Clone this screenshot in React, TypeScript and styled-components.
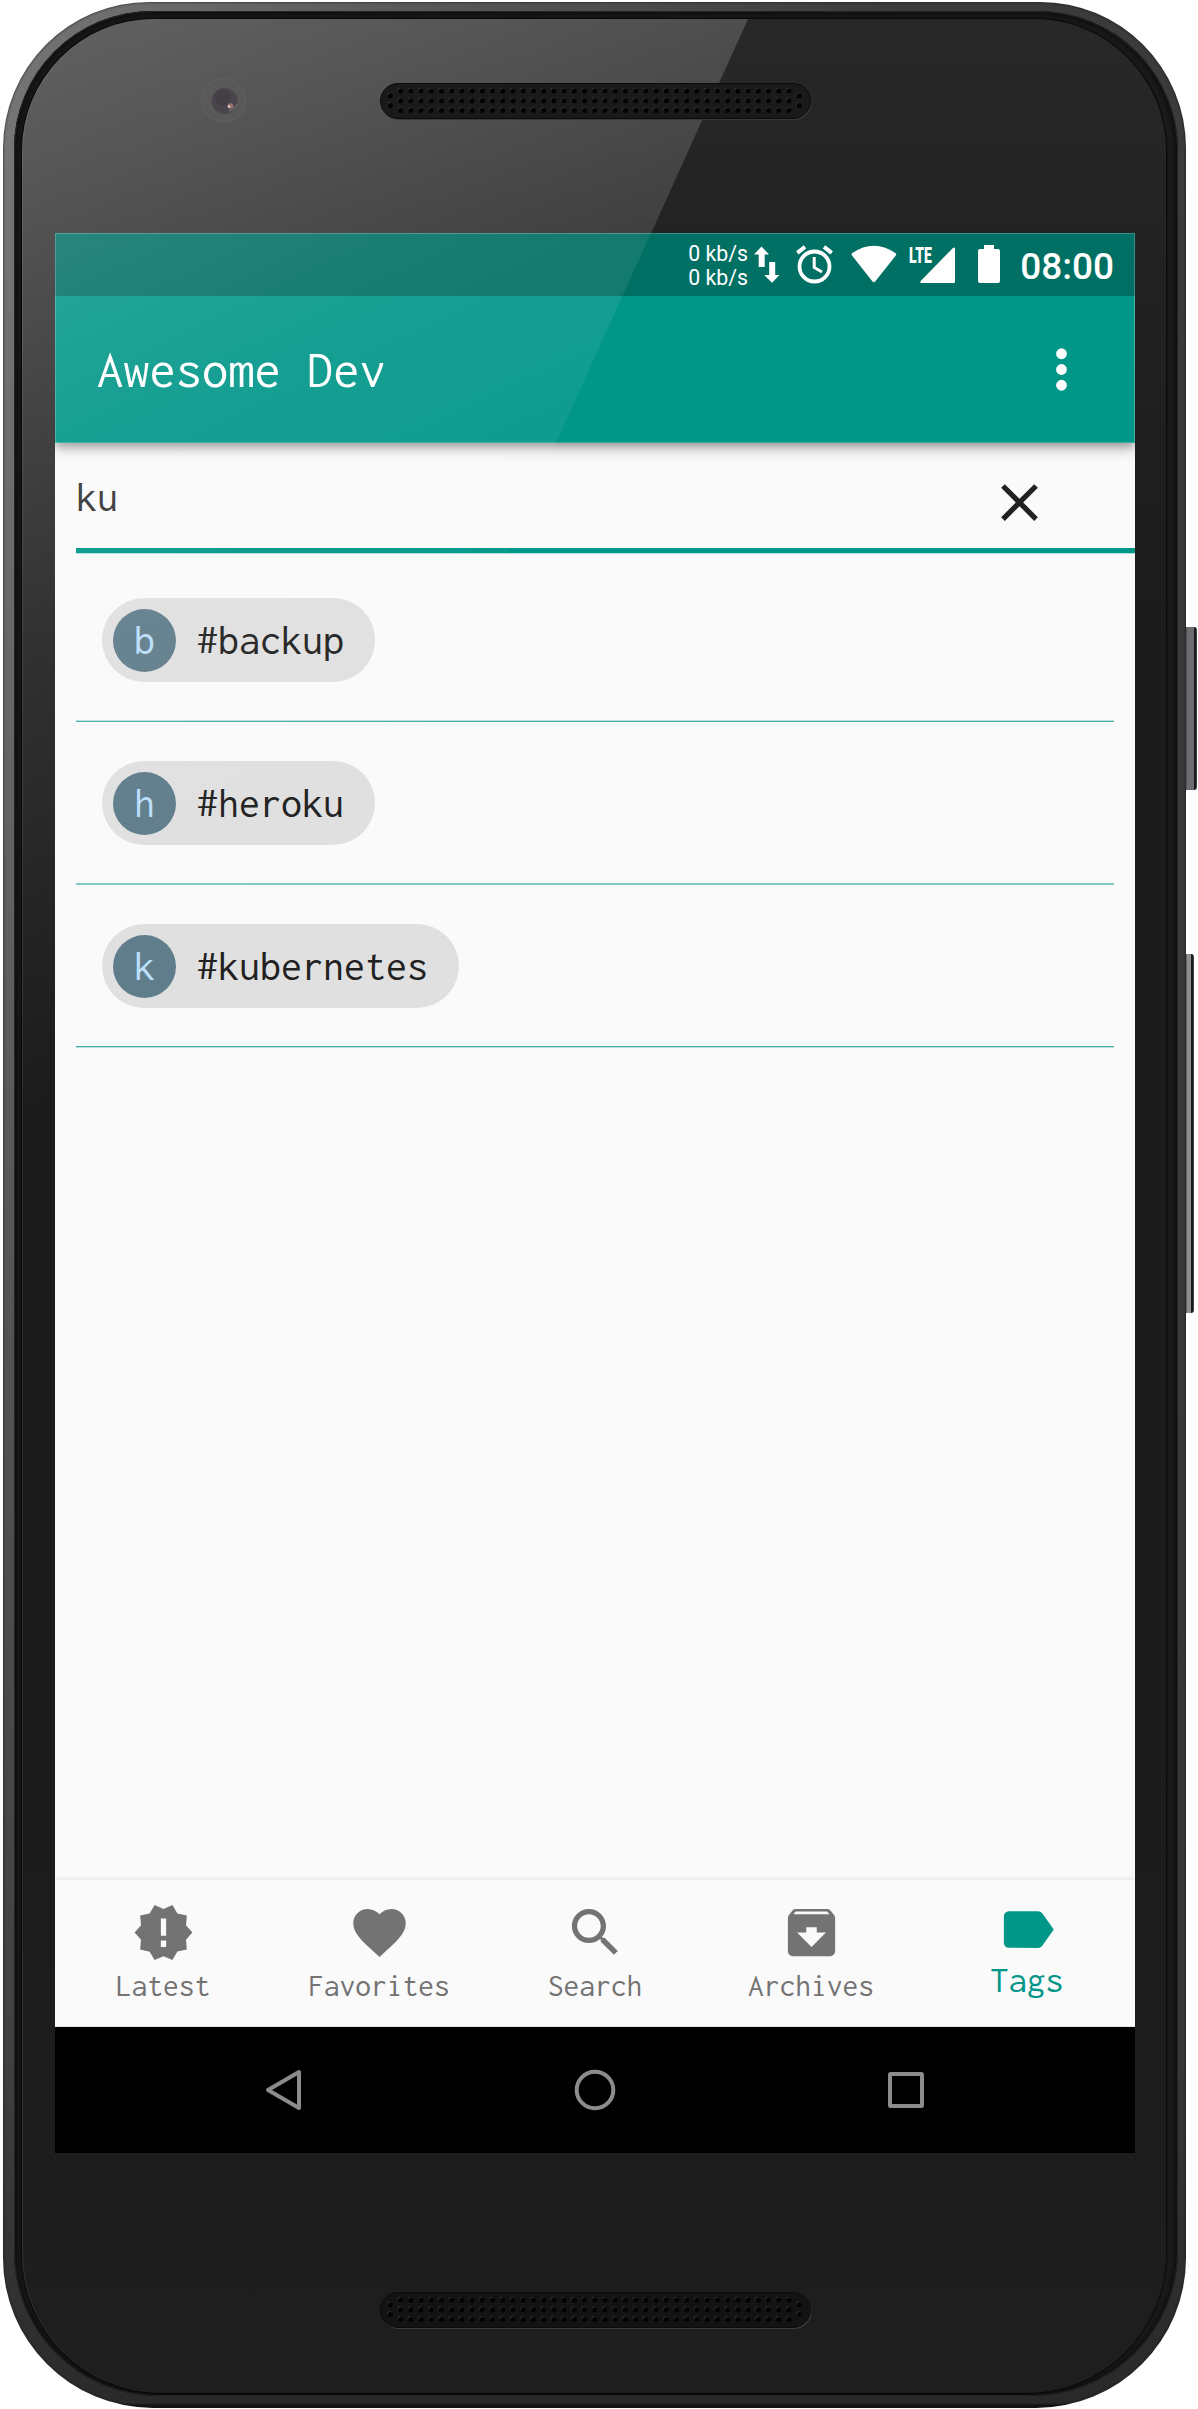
import React from "react";
import styled, { createGlobalStyle } from "styled-components";

const MONO = `Inconsolata, "DejaVu Sans Mono", monospace`;
const TEAL = "#009688";

const GlobalStyle = createGlobalStyle`
  body {
    margin: 0;
    background: #ffffff;
  }
`;

/* ---------- Handset ---------- */

const Stage = styled.div`
  position: relative;
  box-sizing: border-box;
  width: 1198px;
  height: 2409px;
  padding: 2px 0 0 3px;
  overflow: hidden;
`;

const SideButton = styled.div<{ $top: number; $height: number; $width: number; $light: string }>`
  position: absolute;
  left: 1185px;
  top: ${(p) => p.$top}px;
  width: ${(p) => p.$width}px;
  height: ${(p) => p.$height}px;
  border-radius: 0 3px 3px 0;
  background: linear-gradient(
    to right,
    #3c3a3b 0 1px,
    ${(p) => p.$light} 2px calc(100% - 3.5px),
    #1b1b1b calc(100% - 2.5px) calc(100% - 1px),
    #6a6869 100%
  );
`;

const Body = styled.div`
  position: relative;
  box-sizing: border-box;
  width: 1183px;
  height: 2406px;
  padding: 9px 8px 12px 11px;
  border-radius: 146px 146px 150px 150px;
  background:
    linear-gradient(to bottom, transparent calc(100% - 5px), #151515 calc(100% - 3px)),
    radial-gradient(ellipse 900px 2300px at 0 150px, rgba(255, 255, 255, 0.3), rgba(255, 255, 255, 0.14) 50%, transparent 100%),
    linear-gradient(to bottom, #3c3a3b 0, #3a3738 60%, #383637 85%, #2a292a 100%);
  box-shadow: inset 0 0 2px 1px rgba(20, 20, 20, 0.45);
`;

const Rim = styled.div`
  box-sizing: border-box;
  height: 100%;
  padding: 8px 12px 3px 8px;
  border-radius: 138px 140px 146px 144px;
  background: #1c1c1c;
  box-shadow: inset 0 0 0 1px #252425, inset 0 0 5px 4px #0f0f0f;
`;

const Glass = styled.div`
  position: relative;
  box-sizing: border-box;
  height: 100%;
  padding: 0 31px 0 33px;
  border-radius: 132px 132px 140px 140px;
  background: linear-gradient(to bottom, #282828 0, #222222 250px, #1b1b1b 620px, #1b1b1b 1700px, #1e1e1e 100%);
  box-shadow: 0 0 2px 1px #050505, inset 1px 0 0 rgba(255, 255, 255, 0.09);
  overflow: hidden;

  &::before {
    content: "";
    position: absolute;
    inset: 0;
    clip-path: polygon(0 0, 726px 0, 0 1603px);
    background: linear-gradient(
      155deg,
      rgba(255, 255, 255, 0.27) 0,
      rgba(255, 255, 255, 0.22) 180px,
      rgba(255, 255, 255, 0.15) 400px,
      rgba(255, 255, 255, 0.09) 600px,
      transparent 1000px
    );
  }
`;

const TopBezel = styled.div`
  position: relative;
  display: flex;
  align-items: flex-start;
  box-sizing: border-box;
  height: 214px;
  padding: 59px 0 0 146px;
  gap: 133px;
`;

const BottomBezel = styled.div`
  display: flex;
  padding: 136px 0 0 325px;
`;

const SpeakerArt = styled.svg<{ $drop: number }>`
  display: block;
  flex: none;
  margin-top: ${(p) => p.$drop}px;
`;

const BlockSvg = styled.svg`
  display: block;
  flex: none;
`;

/* ---------- Screen ---------- */

const Screen = styled.div`
  position: relative;
  display: flex;
  flex-direction: column;
  width: 1080px;
  height: 1920px;
  background: #fafafa;
  overflow: hidden;
`;

const ScreenGlare = styled.div`
  position: absolute;
  inset: 0;
  z-index: 3;
  pointer-events: none;
  clip-path: polygon(0 0, 596px 0, 0 1316px);
  background: linear-gradient(
    155deg,
    rgba(255, 255, 255, 0.155) 0,
    rgba(255, 255, 255, 0.09) 190px,
    rgba(255, 255, 255, 0.055) 400px,
    rgba(255, 255, 255, 0.02) 560px,
    transparent 700px
  );
`;

const Header = styled.header`
  position: relative;
  z-index: 2;
  flex: none;
  box-shadow: 0 6px 12px rgba(0, 0, 0, 0.27), 0 2px 8px rgba(0, 0, 0, 0.2);

  &::after {
    content: "";
    position: absolute;
    inset: 0;
    border: 1px solid rgba(255, 255, 255, 0.22);
  }
`;

const StatusBar = styled.div`
  display: flex;
  align-items: flex-start;
  justify-content: flex-end;
  box-sizing: border-box;
  height: 63px;
  padding: 12px 21px 0 0;
  background: #006f64;
  color: #ffffff;
  font-family: Roboto, sans-serif;
`;

const Speed = styled.div`
  margin: -3px 6px 0 0;
  font-size: 21.3px;
  line-height: 24px;
  white-space: nowrap;
`;

const StatusIcon = styled.svg<{ $after: number }>`
  display: block;
  flex: none;
  margin-right: ${(p) => p.$after}px;
`;

const Signal = styled.div`
  display: flex;
  width: 46px;
  margin-right: 23px;
`;

const SignalLabel = styled.span`
  width: 11px;
  margin-top: 1px;
  font-size: 22.5px;
  font-weight: 900;
  line-height: 18px;
  white-space: nowrap;
  transform: scaleX(0.62);
  transform-origin: left top;
`;

const Clock = styled.div`
  margin-top: 4px;
  font-size: 37px;
  font-weight: 500;
  line-height: 36px;
`;

const AppBar = styled.div`
  display: flex;
  align-items: center;
  justify-content: space-between;
  height: 147px;
  padding: 0 42px;
  background: ${TEAL};
`;

const Title = styled.h1`
  margin: 0;
  color: #ffffff;
  font-family: ${MONO};
  font-size: 52.5px;
  font-weight: 400;
  line-height: 62px;
`;

const SearchField = styled.div`
  display: flex;
  align-items: center;
  justify-content: space-between;
  flex: none;
  box-sizing: border-box;
  height: 110px;
  margin-left: 21px;
  padding: 0 84px 0 0;
  border-bottom: 5px solid ${TEAL};
  box-shadow: 0 1px 0 #b2dfdb;
`;

const Query = styled.span`
  margin-top: 2px;
  color: #333333;
  font-family: ${MONO};
  font-size: 42px;
  line-height: 50px;
`;

const ClearIcon = styled.svg`
  display: block;
  margin-top: 13px;
`;

const TagList = styled.ul`
  flex: 1;
  margin: 0;
  padding: 6px 21px 0;
  list-style: none;
`;

const TagRow = styled.li`
  display: flex;
  flex-direction: column;
  align-items: flex-start;
  justify-content: space-between;
  box-sizing: border-box;
  height: 163px;
  padding-top: 39px;
`;

const Chip = styled.div`
  display: flex;
  align-items: center;
  box-sizing: border-box;
  height: 84px;
  margin-left: 26px;
  padding: 0 31px 0 11px;
  border-radius: 42px;
  background: #e0e0e0;
`;

const Avatar = styled.span`
  width: 63px;
  height: 63px;
  margin-right: 21px;
  border-radius: 50%;
  background: #607d8b;
  color: #bbdefb;
  font-family: ${MONO};
  font-size: 42px;
  line-height: 62px;
  text-align: center;
`;

const ChipText = styled.span`
  margin-top: -1px;
  color: #212121;
  font-family: ${MONO};
  font-size: 42px;
  line-height: 62px;
`;

const Divider = styled.div<{ $upper: string; $lower: string }>`
  align-self: stretch;
  height: 2px;
  background: linear-gradient(to bottom, ${(p) => p.$upper} 50%, ${(p) => p.$lower} 50%);
`;

const TabBar = styled.nav`
  display: flex;
  flex: none;
  height: 147px;
  background: #fafafa;
  box-shadow: 0 -2px 4px rgba(0, 0, 0, 0.075), inset 0 -1px 0 #e4e4e4;
`;

const Tab = styled.div<{ $active?: boolean }>`
  display: flex;
  flex: 1;
  flex-direction: column;
  align-items: center;
  box-sizing: border-box;
  padding-top: ${(p) => (p.$active ? 18 : 21)}px;
  color: ${(p) => (p.$active ? TEAL : "#737373")};
  font-family: ${MONO};
  font-size: ${(p) => (p.$active ? 36.75 : 31.5)}px;
  line-height: ${(p) => (p.$active ? 40 : 36)}px;
`;

const TabLabel = styled.span<{ $active?: boolean }>`
  margin-top: ${(p) => (p.$active ? -1 : 4)}px;
`;

const SystemBar = styled.div`
  display: flex;
  flex: none;
  align-items: center;
  justify-content: center;
  gap: 239px;
  height: 126px;
  background: #000000;
`;

/* ---------- Drawings ---------- */

const COLUMNS = Array.from({ length: 39 }, (_, i) => 20.5 + i * 10.22);
const ROWS = [8, 17.8, 27.6];

function Speaker({ drop, fill, lip }: { drop: number; fill: string; lip: string }) {
  const dots: [number, number][] = [
    [10.3, 12.8],
    [10.3, 22.6],
    [419.3, 12.8],
    [419.3, 22.6],
  ];
  COLUMNS.forEach((x) => ROWS.forEach((y) => dots.push([x, y])));
  return (
    <SpeakerArt $drop={drop} width="432" height="38" viewBox="0 0 432 38">
      <rect x="1.5" y="2" width="430" height="35" rx="17.5" fill={lip} />
      <rect x="0.5" y="0.5" width="430" height="35" rx="17.5" fill={fill} stroke="#0b0b0b" />
      {dots.map(([x, y], i) => (
        <g key={i}>
          <circle cx={x - 0.8} cy={y - 1} r="2.3" fill="#343434" />
          <circle cx={x} cy={y} r="2.5" fill="#030303" />
        </g>
      ))}
    </SpeakerArt>
  );
}

function Camera() {
  return (
    <BlockSvg width="46" height="46" viewBox="0 0 46 46">
      <circle cx="22.5" cy="22.5" r="21.8" fill="#5a595a" stroke="#636263" />
      <circle cx="23.7" cy="23" r="13" fill="#4a454c" />
      <circle cx="21.5" cy="19.5" r="8" fill="#443f47" />
      <path d="M28 33a13 13 0 0 0 8-7" fill="none" stroke="#716a70" strokeWidth="1.5" />
      <circle cx="29.5" cy="28" r="2.8" fill="#a0736b" />
      <circle cx="28" cy="28.6" r="1.2" fill="#e8dfe4" />
    </BlockSvg>
  );
}

function MaterialIcon({ d }: { d: string }) {
  return (
    <BlockSvg width="63" height="63" viewBox="0 0 24 24" fill="currentColor">
      <path d={d} />
    </BlockSvg>
  );
}

const tabs = [
  {
    label: "Latest",
    d: "M23 12l-2.44-2.78.34-3.68-3.61-.82-1.89-3.18L12 3 8.6 1.54 6.71 4.72l-3.61.81.34 3.68L1 12l2.44 2.78-.34 3.69 3.61.82 1.89 3.18L12 21l3.4 1.46 1.89-3.18 3.61-.82-.34-3.68L23 12zm-10 5.5h-2V15h2v2.500zm0-4.300h-2V6.700h2v6.500z",
  },
  {
    label: "Favorites",
    d: "M12 21.35l-1.45-1.32C5.4 15.36 2 12.28 2 8.5 2 5.42 4.42 3 7.5 3c1.74 0 3.41.81 4.5 2.09C13.09 3.81 14.76 3 16.5 3 19.58 3 22 5.42 22 8.5c0 3.78-3.4 6.86-8.55 11.54L12 21.35z",
  },
  {
    label: "Search",
    d: "M15.5 14h-.79l-.28-.27C15.41 12.59 16 11.11 16 9.5 16 5.91 13.09 3 9.5 3S3 5.91 3 9.5 5.91 16 9.5 16c1.61 0 3.09-.59 4.23-1.57l.27.28v.79l5 4.99L20.49 19l-4.99-5zm-6 0C7.01 14 5 11.99 5 9.5S7.01 5 9.5 5 14 7.01 14 9.500 11.99 14 9.5 14z",
  },
  {
    label: "Archives",
    d: "M20.54 5.23l-1.39-1.68C18.88 3.21 18.47 3 18 3H6c-.47 0-.88.21-1.16.55L3.46 5.23C3.17 5.57 3 6.02 3 6.5V19c0 1.1.9 2 2 2h14c1.1 0 2-.9 2-2V6.5c0-.48-.17-.93-.46-1.27zM12 17.5L6.5 12H10v-2h4v2h3.500L12 17.5zM5.12 5l.81-1h12l.94 1H5.12z",
  },
  {
    label: "Tags",
    active: true,
    d: "M17.63 5.84C17.27 5.33 16.67 5 16 5L5 5.01C3.9 5.01 3 5.9 3 7v10c0 1.1.9 1.99 2 1.99L16 19c.67 0 1.27-.33 1.63-.84L22 12l-4.37-6.16z",
  },
];

const tags = [
  { name: "backup", upper: "#b6e0dc", lower: "#45b0a6" },
  { name: "heroku", upper: "#7ecac3", lower: "#7ecac3" },
  { name: "kubernetes", upper: "#45b0a6", lower: "#b6e0dc" },
];

export default function App() {
  return (
    <>
      <GlobalStyle />
      <Stage>
        <SideButton $top={627} $height={163} $width={12} $light="#6d6b6f" />
        <SideButton $top={954} $height={359} $width={8.5} $light="#8f8d8e" />
        <Body>
          <Rim>
            <Glass>
              <TopBezel>
                <Camera />
                <Speaker drop={5} fill="#1a1a1a" lip="#3a3a3b" />
              </TopBezel>

              <Screen>
                <Header>
                  <StatusBar>
                    <Speed>
                      <div>0 kb/s</div>
                      <div>0 kb/s</div>
                    </Speed>
                    <StatusIcon $after={16} width="26" height="38" viewBox="0 0 26 38" fill="#fff">
                      <path d="M7.500 1.500L15 9.500H10.700V22H4.700V9.500H0z" />
                      <path d="M15.200 17H21.200V30H25.500L18 37.800L10.200 30H15.200z" />
                    </StatusIcon>
                    <StatusIcon $after={18} width="37" height="39" viewBox="0 0 37 39" fill="none" stroke="#fff">
                      <circle cx="18.500" cy="21.500" r="15" strokeWidth="3.800" />
                      <path d="M18.200 12V22.500L26 27" strokeWidth="3" />
                      <path d="M1.300 7.800L9 1.800M35.700 7.800L28 1.800" strokeWidth="4" />
                    </StatusIcon>
                    <StatusIcon $after={12} width="46" height="38" viewBox="0 0 46 38" fill="#fff">
                      <path d="M1 10.500Q-.2 9 1.400 8Q22.800-6.500 44.300 8Q46 9 44.800 10.500L24.200 36.500Q22.800 38 21.500 36.500z" />
                    </StatusIcon>
                    <Signal>
                      <SignalLabel>LTE</SignalLabel>
                      <BlockSvg width="35" height="38" viewBox="0 0 35 38" fill="#fff">
                        <path d="M32.500 3.400Q35 1.500 35 4V36.500Q35 38 33.500 38H1.500Q-.7 38 .7 36z" />
                      </BlockSvg>
                    </Signal>
                    <StatusIcon $after={20} width="22" height="38" viewBox="0 0 22 38" fill="#fff">
                      <path d="M6 0H16V4H20Q22 4 22 6V36Q22 38 20 38H2Q0 38 0 36V6Q0 4 2 4H6z" />
                    </StatusIcon>
                    <Clock>08:00</Clock>
                  </StatusBar>
                  <AppBar>
                    <Title>Awesome Dev</Title>
                    <BlockSvg width="63" height="63" viewBox="0 0 24 24" fill="#fff">
                      <circle cx="12" cy="6" r="2.050" />
                      <circle cx="12" cy="12" r="2.050" />
                      <circle cx="12" cy="18" r="2.050" />
                    </BlockSvg>
                  </AppBar>
                </Header>

                <SearchField>
                  <Query>ku</Query>
                  <ClearIcon width="63" height="63" viewBox="0 0 24 24" fill="#212121">
                    <path d="M19 6.410L17.590 5 12 10.590 6.410 5 5 6.410 10.590 12 5 17.590 6.410 19 12 13.410 17.590 19 19 17.590 13.410 12z" />
                  </ClearIcon>
                </SearchField>

                <TagList>
                  {tags.map((tag) => (
                    <TagRow key={tag.name}>
                      <Chip>
                        <Avatar>{tag.name[0]}</Avatar>
                        <ChipText>#{tag.name}</ChipText>
                      </Chip>
                      <Divider $upper={tag.upper} $lower={tag.lower} />
                    </TagRow>
                  ))}
                </TagList>

                <TabBar>
                  {tabs.map((tab) => (
                    <Tab key={tab.label} $active={tab.active}>
                      <MaterialIcon d={tab.d} />
                      <TabLabel $active={tab.active}>{tab.label}</TabLabel>
                    </Tab>
                  ))}
                </TabBar>

                <SystemBar>
                  <BlockSvg width="72" height="72" viewBox="0 0 72 72" fill="none" stroke="#8c8c8c" strokeWidth="4">
                    <path d="M51 18V54L20 36z" strokeLinejoin="round" />
                  </BlockSvg>
                  <BlockSvg width="72" height="72" viewBox="0 0 72 72" fill="none" stroke="#8c8c8c" strokeWidth="4">
                    <circle cx="36" cy="36" r="18.300" />
                  </BlockSvg>
                  <BlockSvg width="72" height="72" viewBox="0 0 72 72" fill="none" stroke="#8c8c8c" strokeWidth="4">
                    <rect x="20" y="20" width="32" height="32" rx="0.800" />
                  </BlockSvg>
                </SystemBar>
                <ScreenGlare />
              </Screen>

              <BottomBezel>
                <Speaker drop={3} fill="#131313" lip="#3c3c3c" />
              </BottomBezel>
            </Glass>
          </Rim>
        </Body>
      </Stage>
    </>
  );
}
